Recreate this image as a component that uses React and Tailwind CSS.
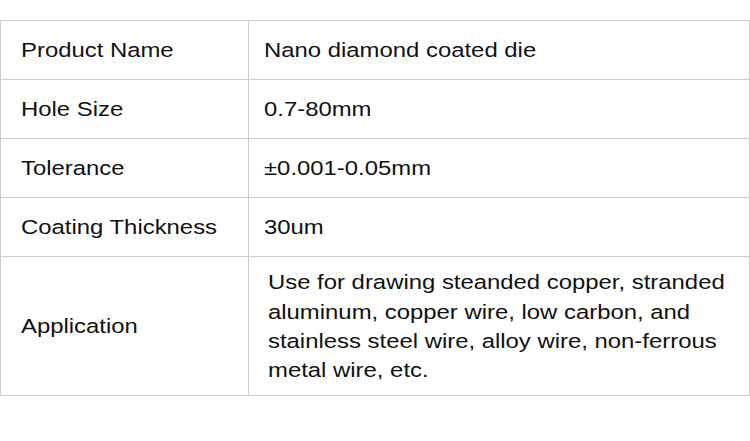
import React from 'react';

const rows = [
    { label: 'Product Name', value: 'Nano diamond coated die' },
    { label: 'Hole Size', value: '0.7-80mm' },
    { label: 'Tolerance', value: '±0.001-0.05mm' },
    { label: 'Coating Thickness', value: '30um' },
];

// the reference type is a horizontally stretched Helvetica
const Wide = ({ children }) => (
    <span className="inline-block whitespace-nowrap origin-left scale-x-[1.165]">{children}</span>
);

const App = () => {
    return (
        <div className="w-[750px] h-[441px] bg-white pt-[20px] text-[#111] font-['Liberation_Sans',Arial,sans-serif] text-[20.5px]">
            <div className="border border-[#cccccc]">
                {rows.map((row) => (
                    <div key={row.label} className="flex h-[59px] border-b border-[#cccccc]">
                        <div className="w-[248px] shrink-0 border-r border-[#cccccc] pl-[20px] flex items-center leading-[24px]">
                            <Wide>{row.label}</Wide>
                        </div>
                        <div className="flex-1 pl-[15px] flex items-center leading-[24px]">
                            <Wide>{row.value}</Wide>
                        </div>
                    </div>
                ))}
                <div className="flex h-[138px]">
                    <div className="w-[248px] shrink-0 border-r border-[#cccccc] pl-[20px] flex items-center leading-[24px]">
                        <Wide>Application</Wide>
                    </div>
                    <div className="flex-1 pl-[19px] flex items-center leading-[29.3px]">
                        <Wide>
                            Use for drawing steanded copper, stranded<br />
                            aluminum, copper wire, low carbon, and<br />
                            stainless steel wire, alloy wire, non-ferrous<br />
                            metal wire, etc.
                        </Wide>
                    </div>
                </div>
            </div>
        </div>
    );
};

export default App;
